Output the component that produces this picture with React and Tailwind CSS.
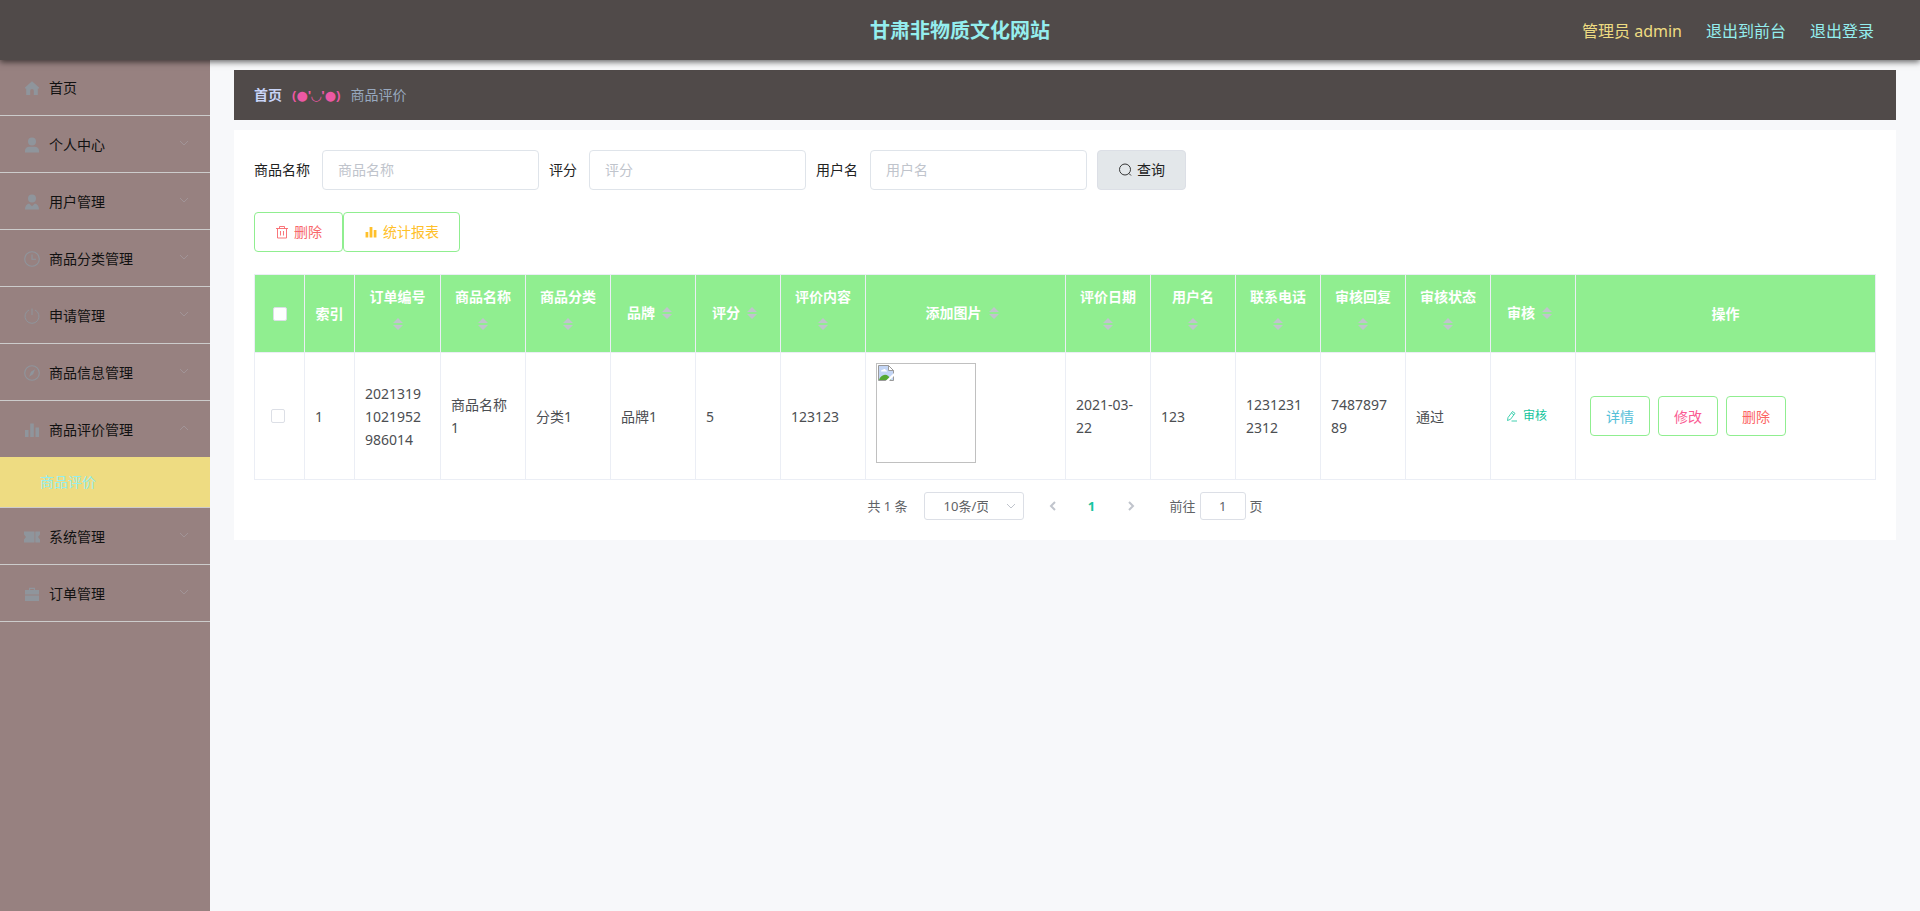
import React from 'react';

const paths = {
    home: <path d="M9 2.2 16 8.6v.8h-1.2V16h-4v-4.2a1.8 1.8 0 0 0-3.6 0V16h-4V9.400H2v-.8z" />,
    user: (
        <>
            <circle cx="9" cy="5.600" r="4" />
            <path d="M2 16.500v-1.700c0-2.600 2-4 4.400-4h5.200c2.400 0 4.400 1.400 4.400 4v1.700z" />
        </>
    ),
    custom: (
        <>
            <circle cx="9" cy="5.600" r="4" />
            <path d="M2 16.500c0-3.300 1.500-5.300 4.100-6.100L9 13.200l2.900-2.800c2.600.8 4.100 2.800 4.100 6.100z" />
        </>
    ),
    clock: (
        <g fill="none" stroke="currentColor" strokeWidth="1.100">
            <circle cx="9" cy="9" r="7.300" />
            <path d="M9 4.500V9.300h4" />
        </g>
    ),
    power: (
        <g fill="none" stroke="currentColor" strokeWidth="1">
            <path d="M6 3A7 7 0 1 0 12 3" />
            <path d="M9 1.500v6.500" />
        </g>
    ),
    compass: (
        <>
            <circle cx="9" cy="9" r="7.300" fill="none" stroke="currentColor" strokeWidth="1.100" />
            <path d="m12 5.200-1.900 5.100-4 2.500 1.900-5.100z" />
        </>
    ),
    bars: <path d="M2 9h3.500v7H2zM7.200 2.500h3.600V16H7.200zM12.500 6.500H16V16h-3.500z" />,
    ticket: <path d="M1 3.500h10.500v11H1v-3l2-2.500-2-2.500zM12.300 3.500H17v3L15 9l2 2.500v3h-4.700z" />,
    suitcase: (
        <>
            <path d="M6 5V2.800h6V5h4v4.500H2V5zm1.200 0h3.600V4H7.200z" fillRule="evenodd" />
            <path d="M2 10.500h14V16H2z" />
        </>
    ),
};

const menu = [
    { label: '首页', icon: 'home' },
    { label: '个人中心', icon: 'user', arrow: true },
    { label: '用户管理', icon: 'custom', arrow: true },
    { label: '商品分类管理', icon: 'clock', arrow: true },
    { label: '申请管理', icon: 'power', arrow: true },
    { label: '商品信息管理', icon: 'compass', arrow: true },
    { label: '商品评价管理', icon: 'bars', arrow: true, children: ['商品评价'] },
    { label: '系统管理', icon: 'ticket', arrow: true },
    { label: '订单管理', icon: 'suitcase', arrow: true },
];

const filters = [
    { id: 'goods', label: '商品名称' },
    { id: 'score', label: '评分' },
    { id: 'username', label: '用户名' },
];

const columns = [
    { label: '订单编号', value: '20213191021952986014', width: 'w-[86px]' },
    { label: '商品名称', value: '商品名称1' },
    { label: '商品分类', value: '分类1' },
    { label: '品牌', value: '品牌1' },
    { label: '评分', value: '5' },
    { label: '评价内容', value: '123123' },
    { label: '添加图片', type: 'image', width: 'w-[200px]' },
    { label: '评价日期', value: '2021-03-22' },
    { label: '用户名', value: '123' },
    { label: '联系电话', value: '12312312312' },
    { label: '审核回复', value: '748789789' },
    { label: '审核状态', value: '通过' },
    { label: '审核', type: 'audit' },
];

const Chevron = ({ className, d = 'm2 4 4 4 4-4' }) => (
    <svg viewBox="0 0 12 12" className={className} fill="none" stroke="currentColor" aria-hidden="true">
        <path d={d} />
    </svg>
);

const Sorter = () => (
    <span className="inline-flex h-[34px] w-6 items-center justify-center pb-0.5 align-middle">
        <svg viewBox="0 0 10 12" className="h-3 w-2.5 fill-[#c0c4cc]" aria-hidden="true">
            <path d="M5 0l5 5H0zM0 7h10l-5 5z" />
        </svg>
    </span>
);

const BrokenImage = () => (
    <div role="img" aria-label="添加图片" className="mb-1.5 h-[100px] w-[100px] border border-[#c0c0c0] p-px">
        <svg viewBox="0 0 16 16" className="h-4 w-4" aria-hidden="true">
            <path d="M.5.500h10l5 5v10H.5z" fill="#c3d5f5" stroke="#9a9a9a" />
            <path d="M3 6.500c0-1.200 1-2 2-1.700.6-1.300 2.600-1 2.800.5.9 0 1.200.6 1.200 1.200z" fill="#fff" />
            <path d="M1 15c1-3 3.500-5.200 6-5.200s4 1.400 6 5.200z" fill="#55a832" />
            <path d="M10.500.500v5h5z" fill="#fff" stroke="#9a9a9a" />
            <path d="M7.500 16 16 8v3l-5 5z" fill="#fff" />
        </svg>
    </div>
);

const Header = () => (
    <header className="relative z-10 grid h-[60px] grid-cols-[1fr_auto_1fr] items-center bg-[#504a49] pt-0.5 shadow-[0_2px_6px_rgba(0,0,0,0.6)]">
        <h1 className="col-start-2 text-xl font-bold text-[#94eeee]">甘肃非物质文化网站</h1>
        <div className="flex justify-end gap-6 pr-[46px] text-base text-[#94eeee]">
            <span className="text-[#eedc82]">管理员 admin</span>
            <a href="#front">退出到前台</a>
            <a href="#logout">退出登录</a>
        </div>
    </header>
);

const Sidebar = () => (
    <nav className="w-[210px] shrink-0 bg-[#978180]">
        <ul>
            {menu.map(item => (
                <li key={item.label} className="border-b border-[#cccccc]">
                    <a href="#menu" className="flex h-14 items-center gap-2 pt-0.5 pr-5 pl-[23px] text-[#111111]">
                        <svg viewBox="0 0 18 18" className="h-[18px] w-[18px] fill-current text-[#8f959c]" aria-hidden="true">
                            {paths[item.icon]}
                        </svg>
                        <span className="flex-1">{item.label}</span>
                        {item.arrow && (
                            <Chevron
                                className="mb-1 h-3 w-3 text-[#a19497]"
                                d={item.children ? 'm2 8 4-4 4 4' : 'm2 4 4 4 4-4'}
                            />
                        )}
                    </a>
                    {item.children?.map(child => (
                        <a key={child} href="#reviews" className="block h-[50px] bg-[#eedc82] pl-10 leading-[50px] text-[#94eeee]">{child}</a>
                    ))}
                </li>
            ))}
        </ul>
    </nav>
);

const SearchForm = () => (
    <form className="flex items-center gap-2.5" onSubmit={e => e.preventDefault()}>
        {filters.map(f => (
            <div key={f.id} className="flex items-center gap-3">
                <label htmlFor={f.id}>{f.label}</label>
                <input
                    id={f.id}
                    type="text"
                    placeholder={f.label}
                    className="h-10 w-[217px] rounded border border-[#dfe4ea] bg-white px-[15px] pb-0.5 placeholder:text-[#c0c4cc]"
                />
            </div>
        ))}
        <button type="submit" className="flex h-10 items-center gap-[5px] rounded border border-[#dcdfe6] bg-[#e3e7ea] px-5">
            <svg viewBox="0 0 14 14" className="h-3.5 w-3.5" fill="none" stroke="currentColor" strokeWidth="0.9" aria-hidden="true">
                <circle cx="7" cy="6.500" r="5.500" />
                <path d="m11 10.500 2 2" />
            </svg>
            查询
        </button>
    </form>
);

const Toolbar = () => (
    <div className="mt-[22px] flex">
        <button type="button" className="flex h-10 items-center gap-[5px] rounded border border-[#90ee90] px-5 text-[#f8686c]">
            <svg viewBox="0 0 14 14" className="h-3.5 w-3.5" fill="none" stroke="currentColor" strokeWidth="0.9" aria-hidden="true">
                <path d="M1 3.500h12M2.500 3.500v9.500h9V3.500M4.500 3.500v-2h5v2M5.500 6v4.500M8.500 6v4.500" />
            </svg>
            删除
        </button>
        <button type="button" className="flex h-10 items-center gap-[5px] rounded border border-[#90ee90] px-5 text-[#ffc02a]">
            <svg viewBox="0 0 18 18" className="h-3.5 w-3.5 fill-current" aria-hidden="true">{paths.bars}</svg>
            统计报表
        </button>
    </div>
);

const headCell = 'border-r border-b border-[#ebeef5] bg-[#90ee90] px-2.5 py-2.5 font-bold text-white';
const bodyCell = 'border-r border-b border-[#ebeef5] py-2.5 pr-3 pl-2.5 break-all';
const rowButton = 'h-10 w-[60px] rounded border border-[#90ee90]';
const checkbox = 'block h-3.5 w-3.5 appearance-none rounded-xs border border-[#dcdfe6] bg-white checked:bg-[#00c292]';

const CellContent = ({ column }) => {
    if (column.type === 'image') return <BrokenImage />;
    if (column.type === 'audit') {
        return (
            <button type="button" className="flex items-center gap-[5px] px-[5px] text-xs text-[#13c49c]">
                <svg viewBox="0 0 12 12" className="h-3 w-3" fill="none" stroke="currentColor" strokeWidth="0.8" aria-hidden="true">
                    <path d="M1.500 10.500 2 7.500 6.500 1.500 9 3.300 4.500 9.300zM5.500 3l2.400 1.800M5.500 11H11" />
                </svg>
                审核
            </button>
        );
    }
    return column.value;
};

const ReviewTable = () => (
    <table className="mt-[22px] w-full table-fixed border-separate border-spacing-0 border-t border-l border-[#ebeef5] leading-[23px] text-[#4c4e52]">
        <colgroup>
            <col className="w-[50px]" />
            <col className="w-[50px]" />
            {columns.map(c => (
                <col key={c.label} className={c.width} />
            ))}
            <col className="w-[300px]" />
        </colgroup>
        <thead>
            <tr>
                <th className={headCell}>
                    <input type="checkbox" aria-label="全选" className={`${checkbox} mx-auto`} />
                </th>
                <th className={headCell}>索引</th>
                {columns.map(c => (
                    <th key={c.label} className={headCell}>
                        {c.label}
                        <Sorter />
                    </th>
                ))}
                <th className={headCell}>操作</th>
            </tr>
        </thead>
        <tbody>
            <tr>
                <td className={bodyCell}>
                    <input type="checkbox" aria-label="选择第1行" className={`${checkbox} ml-1.5`} />
                </td>
                <td className={bodyCell}>1</td>
                {columns.map(c => (
                    <td key={c.label} className={bodyCell}>
                        <CellContent column={c} />
                    </td>
                ))}
                <td className={bodyCell}>
                    <div className="flex gap-2 pl-1">
                        <button type="button" className={`${rowButton} text-[#54c0d8]`}>详情</button>
                        <button type="button" className={`${rowButton} text-[#fa5c94]`}>修改</button>
                        <button type="button" className={`${rowButton} text-[#fc6464]`}>删除</button>
                    </div>
                </td>
            </tr>
        </tbody>
    </table>
);

const Pagination = () => (
    <div className="mt-3 flex h-7 items-center justify-center text-[13px] text-[#606266]">
        <span className="mr-4">共 1 条</span>
        <div className="grid items-center">
            <select
                aria-label="每页条数"
                className="col-start-1 row-start-1 h-7 w-[100px] appearance-none rounded-[3px] border border-[#dcdfe6] bg-white pr-[35px] pl-[19px]"
            >
                <option>10条/页</option>
            </select>
            <Chevron className="pointer-events-none col-start-1 row-start-1 mr-[7px] h-3 w-3 justify-self-end text-[#c0c4cc]" />
        </div>
        <div className="mr-6 ml-3.5 flex gap-[9px]">
            <button type="button" aria-label="上一页" disabled className="flex h-7 w-[30px] items-center justify-center text-[#c0c4cc]">
                <Chevron className="h-3 w-3 stroke-2" d="M8 2 4 6l4 4" />
            </button>
            <button type="button" className="h-7 w-[30px] font-bold text-[#18c4a0]">1</button>
            <button type="button" aria-label="下一页" disabled className="flex h-7 w-[30px] items-center justify-center text-[#c0c4cc]">
                <Chevron className="h-3 w-3 stroke-2" d="m4 2 4 4-4 4" />
            </button>
        </div>
        <label className="flex items-center gap-1">
            前往
            <input type="text" defaultValue="1" className="h-7 w-[46px] rounded-[3px] border border-[#dcdfe6] text-center" />
            页
        </label>
    </div>
);

const App = () => {
    return (
        <div className="flex min-h-screen flex-col bg-[#f7f8fa] font-['Noto_Sans','Noto_Sans_CJK_SC',sans-serif] text-sm text-[#222222]">
            <Header />
            <div className="-mt-px flex flex-1">
                <Sidebar />
                <main className="min-w-0 flex-1 px-6 pt-[11px]">
                    <div className="flex h-[50px] items-center gap-2.5 bg-[#504a49] px-5">
                        <a href="#home" className="font-bold text-[#c8d4f8]">首页</a>
                        <span className="font-['Noto_Sans','DejaVu_Sans',sans-serif] text-[13px] font-bold text-[#ec58a4]">(●'◡'●)</span>
                        <span className="text-[#97a8be]">商品评价</span>
                    </div>
                    <section className="mt-2.5 bg-white p-5">
                        <SearchForm />
                        <Toolbar />
                        <ReviewTable />
                        <Pagination />
                    </section>
                </main>
            </div>
        </div>
    );
};

export default App;
